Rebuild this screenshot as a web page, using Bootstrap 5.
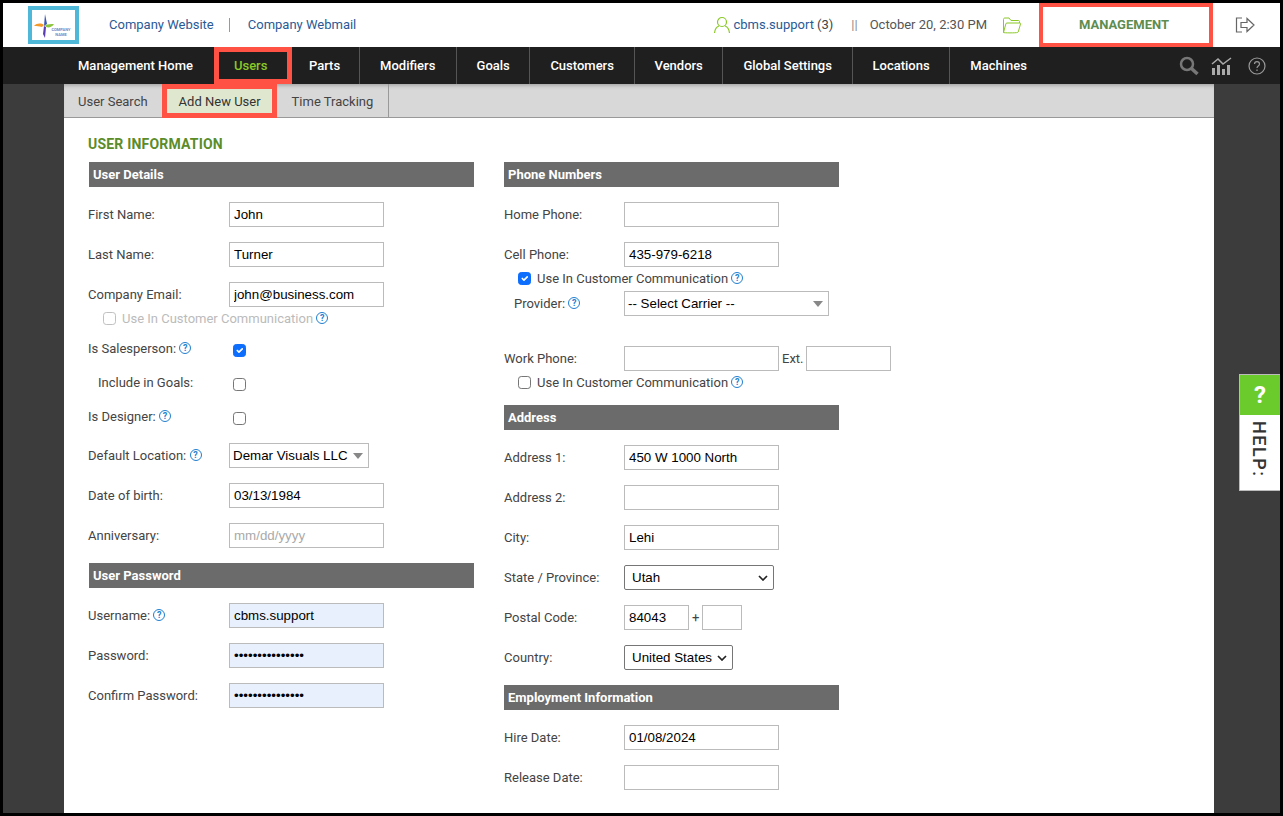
<!DOCTYPE html>
<html lang="en">
<head>
<meta charset="utf-8">
<title>User Information</title>
<link href="https://cdn.jsdelivr.net/npm/bootstrap@5.3.0/dist/css/bootstrap.min.css" rel="stylesheet">
<style>
html,body{height:100%;overflow:hidden}
body{background:#000;font-family:Roboto,"Liberation Sans",sans-serif;font-size:13px;color:#444;padding:3px}
.frame{width:1277px;height:810px;background:#3c3c3c;position:relative;overflow:hidden}
.topbar{height:44px;background:#fff;padding-left:25px}
.logobox{width:51px;height:38px;border:4px solid #4fb8d8;background:#fff;position:relative;flex:none}
.logobox svg{position:absolute;left:1px;top:3px}
.logotext{position:absolute;left:16px;top:18px;font-size:4px;line-height:4.5px;font-weight:700;color:#6f88c6;text-align:center;width:26px}
.toplink{color:#2a5a96;text-decoration:none;font-size:13px}
.firstlink{margin-left:30px}
.userlink{margin-left:2px}
.topsep{width:1px;height:14px;background:#999;margin:0 18px 0 15px}
.usercount{margin-left:3px}
.dblbar{color:#888;margin:0 12px 0 18px}
.dateline{color:#555;font-size:13px}
.folder{margin-left:15px}
.mgmt{width:174px;height:44px;border:4px solid #ff5245;color:#5f8c4f;font-weight:700;font-size:13px;margin-left:17px;padding-right:4px;flex:none}
.logout{margin:0 25px 0 22px}
.mainnav{height:37px;background:#1f1f1f;padding-left:55px}
.mainnav a{display:flex;align-items:center;height:37px;padding:0 19.6px 0 20px;color:#fff;font-weight:500;font-size:13px;text-decoration:none;border-right:1px solid #555;white-space:nowrap}
.mainnav a.plain{border-right:0}
.mainnav a.homelink{padding-right:21px;border-right:0}
.mainnav a.sel{color:#8ac926;border:5px solid #ff5245;padding:0 15px;width:78px}
.mainnav a.aftersel{padding-left:17px;padding-right:19px}
.mainnav a.aftermod{padding-right:20.2px}
.navtools{margin-right:14px;gap:12px}
.navtools svg:last-child{margin-left:3px}
.subnav{margin:0 66px 0 61px;height:34px;background:#d8d8d8;border-bottom:1px solid #999;box-shadow:inset 0 4px 4px -3px rgba(0,0,0,.3)}
.subnav a{display:flex;align-items:center;height:33px;padding:2px 14px 0;color:#444;font-size:13px;text-decoration:none;white-space:nowrap}
.subnav a.sel{background:#dfe8cf;border:5px solid #ff5245;height:34px;width:115px;padding:1px 0 0 12px;color:#333}
.subnav a.last{border-right:1px solid #999;margin-left:1px;padding-right:15px}
.sheet{margin:0 66px 0 61px;height:695px;background:#fff;padding:18px 24px 0}
.pagetitle{color:#5b8c2a;font-size:14px;font-weight:700;line-height:17px;height:17px;margin:0 0 9px;text-transform:uppercase;letter-spacing:.2px}
.leftcol{width:386px;flex:none}
.rightcol{width:387px;flex:none;margin-left:30px}
.sechead{height:25px;background:#6b6b6b;color:#fff;font-weight:700;font-size:13px;line-height:25px;padding-left:4px;margin:0 0 15px 1px}
.rightcol .sechead{width:335px;margin-left:0;padding-left:4px}
.fr{display:flex;align-items:center;height:25px;margin-bottom:15px;white-space:nowrap}
.tight{margin-bottom:0}
.checkrow{height:34px;margin-bottom:0}
.checkrow .lbl{padding-bottom:3px}
.rowsales{margin-top:7px}
.rowloc{margin-top:8px}
.lbl{width:141px;flex:none}
.rightcol .lbl{width:120px}
.rightcol .lbl.inset{padding-left:10px}
.lbl.inset2{padding-left:10px}
.fld{width:155px;height:25px;border:1px solid #bbb;padding:0 4px;font:13.33px "Liberation Sans",sans-serif;color:#000;background:#fff;outline:0;border-radius:0}
.fld::placeholder{color:#aaa}
.fld.auto{background:#e8f0fe}
.w-loc{width:140px}
.w-car{width:205px}
.w-ext{width:85px}
.w-zip{width:65px}
.w-zip4{width:40px}
.w-state{width:150px}
.w-country{width:109px}
.drop{appearance:none;padding-left:3px;background:#fff url("data:image/svg+xml,%3Csvg xmlns='http://www.w3.org/2000/svg' width='10' height='6'%3E%3Cpath d='M0 0h10L5 6z' fill='%23888'/%3E%3C/svg%3E") no-repeat right 5px center}
.natsel{appearance:none;height:25px;border:1px solid #767676;border-radius:2px;padding:0 0 0 7px;font:13.33px "Liberation Sans",sans-serif;color:#000;background:#fff url("data:image/svg+xml,%3Csvg xmlns='http://www.w3.org/2000/svg' width='10' height='6'%3E%3Cpath d='M1 1l4 4 4-4' fill='none' stroke='%23222' stroke-width='1.7'/%3E%3C/svg%3E") no-repeat right 5px center}
.hint{display:inline-flex;align-items:center;justify-content:center;width:12px;height:12px;border:1.4px solid #1f7fd0;border-radius:50%;color:#1f7fd0;font-size:9px;font-weight:700;line-height:1;position:relative;top:-2px}
.chk{width:13px;height:13px;font-size:13px;margin:0;border:1px solid #767676;border-radius:3px;flex:none;float:none}
.chk.indent{margin-left:4px}
.form-check-input:disabled.chk{opacity:.45}
.userow{height:15px;display:flex;align-items:center;gap:6px;white-space:nowrap;margin:4px 0 0 15px}
.rightcol .userow{margin-left:14px}
.rowprov{margin:5px 0 30px}
.rowafter{margin-bottom:15px!important}
.extlbl{margin:0 2px 0 3px}
.pluslbl{margin:0 3px}
.muted{color:#bbb}
.help{position:absolute;left:1236px;top:371px;width:44px;height:117px;background:#fff;border:1px solid #bbb;border-right:0}
.helpq{height:40px;background:#6ccb2c;color:#fff;font-weight:700;font-size:24px;line-height:40px;text-align:center;padding-right:3px}
.helpt{writing-mode:vertical-rl;font-weight:500;font-size:18px;letter-spacing:1.5px;color:#333;padding:6px 0 0;margin-left:7px;line-height:24px}
</style>
</head>
<body>
<div class="frame">
  <div class="topbar d-flex align-items-center">
    <div class="logobox">
      <svg width="22" height="26" viewBox="0 0 22 26"><path d="M12 1l2 10-3 2z" fill="#3a56b5"/><path d="M11 13l2 1-1 11-2-4z" fill="#5a3db5"/><path d="M1 13c3-3 7-3 10-1l-2 2c-3-1-5-1-8-1z" fill="#f39a2a"/><path d="M13 14c3 1 6 0 8-3-3 0-6 0-9 1z" fill="#8cc63f"/></svg>
      <div class="logotext">COMPANY<br>NAME</div>
    </div>
    <a href="#" class="toplink firstlink">Company Website</a>
    <span class="topsep"></span>
    <a href="#" class="toplink">Company Webmail</a>
    <div class="ms-auto d-flex align-items-center">
      <svg width="18" height="18" viewBox="0 0 18 18" fill="none" stroke="#8ac926" stroke-width="1.2"><circle cx="9" cy="6" r="4.5"/><path d="M1.5 17c.5-4.500 3-6.500 4.500-7M16.500 17c-.5-4.500-3-6.500-4.500-7"/></svg>
      <a href="#" class="toplink userlink">cbms.support</a><span class="usercount">(3)</span>
      <span class="dblbar">||</span>
      <span class="dateline">October 20, 2:30 PM</span>
      <svg class="folder" width="20" height="17" viewBox="0 0 20 17" fill="none" stroke="#8ac926" stroke-width="1"><path d="M1.500 15.500V2.500c0-1 .5-1.500 1.500-1.500h4l2 2.500h7.500c.7 0 1 .4 1 1V6M1.500 15.500c0 .5 12.500.5 14 0 .5-.2.8-.5 1-1.500l2-7c.2-.7 0-1-.8-1H5c-.7 0-1 .3-1.200 1z"/></svg>
      <div class="mgmt d-flex align-items-center justify-content-center">MANAGEMENT</div>
      <svg class="logout" width="20" height="16" viewBox="0 0 20 16" fill="none" stroke="#666" stroke-width="1.200"><path d="M7 1H1.500v14H7M6 5.500h6V1.500L19 8l-7 6.500v-4H6z"/></svg>
    </div>
  </div>
  <nav class="mainnav d-flex align-items-center">
    <a href="#" class="homelink">Management Home</a>
    <a href="#" class="sel">Users</a>
    <a href="#" class="aftersel">Parts</a>
    <a href="#" class="aftermod">Modifiers</a>
    <a href="#">Goals</a>
    <a href="#">Customers</a>
    <a href="#">Vendors</a>
    <a href="#">Global Settings</a>
    <a href="#">Locations</a>
    <a href="#" class="plain">Machines</a>
    <div class="ms-auto d-flex align-items-center navtools">
      <svg width="20" height="20" viewBox="0 0 20 20" fill="none" stroke="#777" stroke-width="2.500"><circle cx="8" cy="8" r="6"/><path d="M12.500 12.500L18.500 18" stroke-width="3.500"/></svg>
      <svg width="22" height="20" viewBox="0 0 22 20"><g fill="#aaa"><rect x="1" y="12" width="3" height="7"/><rect x="6" y="9" width="3" height="10"/><rect x="11" y="13" width="3" height="6"/><rect x="16" y="9" width="3" height="10"/></g><path d="M1 8l6-5 5 5 8-6" fill="none" stroke="#aaa" stroke-width="1.500"/></svg>
      <svg width="18" height="18" viewBox="0 0 18 18" fill="none" stroke="#999" stroke-width="1.200"><circle cx="9" cy="9" r="8"/><path d="M6.500 7c0-3.200 5-3.200 5 0 0 2-2.500 2-2.500 4"/><path d="M9 12.500v1.500"/></svg>
    </div>
  </nav>
  <div class="subnav d-flex">
    <a href="#">User Search</a>
    <a href="#" class="sel">Add New User</a>
    <a href="#" class="last">Time Tracking</a>
  </div>
  <div class="sheet">
    <h1 class="pagetitle">User Information</h1>
    <div class="d-flex">
      <div class="leftcol">
        <div class="sechead">User Details</div>
        <div class="fr"><span class="lbl">First Name:</span><input class="fld" value="John"></div>
        <div class="fr"><span class="lbl">Last Name:</span><input class="fld" value="Turner"></div>
        <div class="fr tight"><span class="lbl">Company Email:</span><input class="fld" value="john@business.com"></div>
        <div class="userow muted"><input type="checkbox" class="form-check-input chk" disabled><span>Use In Customer Communication <span class="hint">?</span></span></div>
        <div class="fr checkrow rowsales"><span class="lbl">Is Salesperson: <span class="hint">?</span></span><input type="checkbox" class="form-check-input chk indent" checked></div>
        <div class="fr checkrow"><span class="lbl inset2">Include in Goals:</span><input type="checkbox" class="form-check-input chk indent"></div>
        <div class="fr checkrow"><span class="lbl">Is Designer: <span class="hint">?</span></span><input type="checkbox" class="form-check-input chk indent"></div>
        <div class="fr rowloc"><span class="lbl">Default Location: <span class="hint">?</span></span><select class="fld drop w-loc"><option>Demar Visuals LLC</option></select></div>
        <div class="fr"><span class="lbl">Date of birth:</span><input class="fld" value="03/13/1984"></div>
        <div class="fr"><span class="lbl">Anniversary:</span><input class="fld" placeholder="mm/dd/yyyy"></div>
        <div class="sechead">User Password</div>
        <div class="fr"><span class="lbl">Username: <span class="hint">?</span></span><input class="fld auto" value="cbms.support"></div>
        <div class="fr"><span class="lbl">Password:</span><input type="password" class="fld auto" value="aaaaaaaaaaaaaaa"></div>
        <div class="fr"><span class="lbl">Confirm Password:</span><input type="password" class="fld auto" value="aaaaaaaaaaaaaaa"></div>
      </div>
      <div class="rightcol">
        <div class="sechead">Phone Numbers</div>
        <div class="fr"><span class="lbl">Home Phone:</span><input class="fld"></div>
        <div class="fr tight"><span class="lbl">Cell Phone:</span><input class="fld" value="435-979-6218"></div>
        <div class="userow"><input type="checkbox" class="form-check-input chk" checked><span>Use In Customer Communication <span class="hint">?</span></span></div>
        <div class="fr rowprov"><span class="lbl inset">Provider: <span class="hint">?</span></span><select class="fld drop w-car"><option>-- Select Carrier --</option></select></div>
        <div class="fr tight"><span class="lbl">Work Phone:</span><input class="fld"><span class="extlbl">Ext.</span><input class="fld w-ext"></div>
        <div class="userow rowafter"><input type="checkbox" class="form-check-input chk"><span>Use In Customer Communication <span class="hint">?</span></span></div>
        <div class="sechead">Address</div>
        <div class="fr"><span class="lbl">Address 1:</span><input class="fld" value="450 W 1000 North"></div>
        <div class="fr"><span class="lbl">Address 2:</span><input class="fld"></div>
        <div class="fr"><span class="lbl">City:</span><input class="fld" value="Lehi"></div>
        <div class="fr"><span class="lbl">State / Province:</span><select class="natsel w-state"><option>Utah</option></select></div>
        <div class="fr"><span class="lbl">Postal Code:</span><input class="fld w-zip" value="84043"><span class="pluslbl">+</span><input class="fld w-zip4"></div>
        <div class="fr"><span class="lbl">Country:</span><select class="natsel w-country"><option>United States</option></select></div>
        <div class="sechead">Employment Information</div>
        <div class="fr"><span class="lbl">Hire Date:</span><input class="fld" value="01/08/2024"></div>
        <div class="fr"><span class="lbl">Release Date:</span><input class="fld"></div>
      </div>
    </div>
  </div>
  <div class="help">
    <div class="helpq">?</div>
    <div class="helpt">HELP:</div>
  </div>
</div>
</body>
</html>
